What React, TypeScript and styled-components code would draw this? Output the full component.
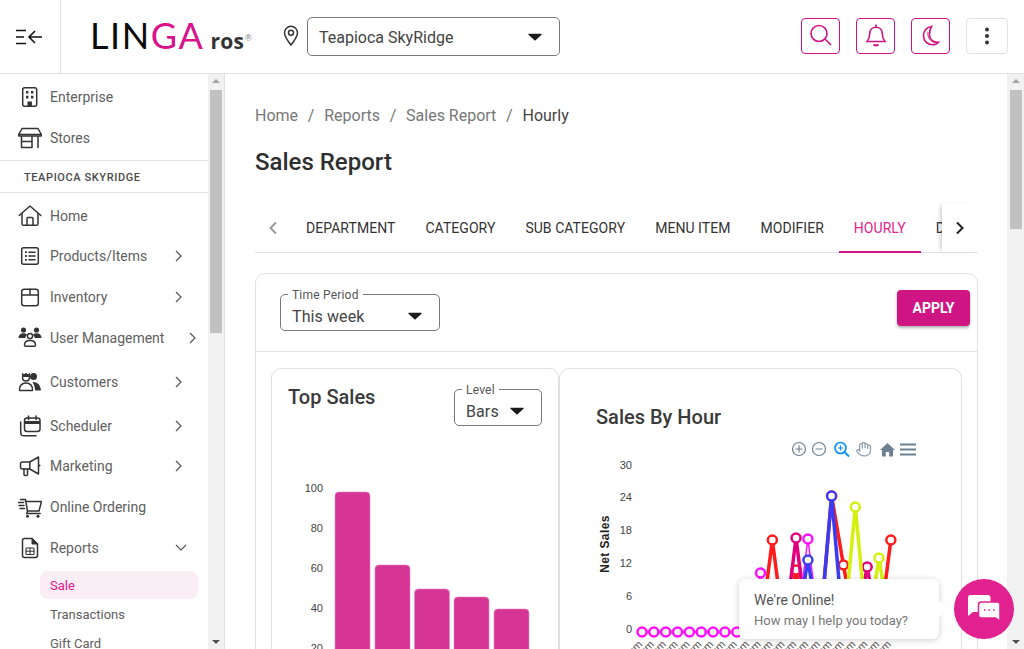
import React from 'react';
import styled, { createGlobalStyle } from 'styled-components';

const GlobalStyle = createGlobalStyle`
    html, body {
        margin: 0;
        padding: 0;
        background: #fff;
        overflow: hidden;
    }
    * {
        box-sizing: border-box;
    }
`;

const PINK = '#cf1583';

const Page = styled.div`
    position: relative;
    width: 1024px;
    height: 649px;
    overflow: hidden;
    display: flex;
    flex-direction: column;
    font-family: Roboto, "Liberation Sans", sans-serif;
    color: #333;
`;

const Header = styled.header`
    height: 74px;
    flex: none;
    display: flex;
    align-items: center;
    border-bottom: 1px solid #e0e0e0;
`;

const MenuCell = styled.div`
    width: 61px;
    height: 73px;
    flex: none;
    display: flex;
    align-items: center;
    justify-content: center;
    padding-right: 3px;
    border-right: 1px solid #e0e0e0;
`;

const Logo = styled.div`
    margin: -3px 0 0 29px;
    width: 193px;
    flex: none;
    display: flex;
    align-items: baseline;
    font-family: Lato, sans-serif;
    white-space: nowrap;
`;

const LogoWord = styled.span<{ $pink?: boolean }>`
    font-size: 36px;
    line-height: 40px;
    font-weight: 400;
    letter-spacing: 1.6px;
    color: ${p => (p.$pink ? '#d9128b' : '#0b0b0b')};
`;

const LogoSuffix = styled.span`
    margin-left: 6px;
    font-family: "Open Sans", sans-serif;
    font-size: 21px;
    font-weight: 700;
    letter-spacing: 0.2px;
    color: #333;
`;

const LogoMark = styled.span`
    align-self: center;
    margin: 6px 0 0 1px;
    font-family: "Liberation Sans", sans-serif;
    font-size: 9px;
    color: #777;
`;

const PinSlot = styled.div`
    width: 16px;
    margin-right: 8px;
    display: flex;
    flex: none;
    margin-top: -2px;
`;

const StoreSelect = styled.div`
    width: 253px;
    height: 39px;
    flex: none;
    margin-top: -1px;
    display: flex;
    align-items: center;
    justify-content: space-between;
    padding: 2px 17px 0 11px;
    border: 1px solid #777;
    border-radius: 5px;
    font-size: 16px;
    color: #444;
`;

const HeaderActions = styled.div`
    display: flex;
    align-items: center;
    margin-left: auto;
    margin-right: 16px;
    margin-top: -1px;
`;

const ActionButton = styled.div`
    width: 39px;
    height: 36px;
    margin-left: 16px;
    display: flex;
    align-items: center;
    justify-content: center;
    border: 1px solid ${PINK};
    border-radius: 4px;
`;

const BellWrap = styled.span`
    display: flex;
    margin-top: -3px;
`;

const MoreButton = styled.div`
    width: 42px;
    height: 36px;
    margin-left: 16px;
    display: flex;
    align-items: center;
    justify-content: center;
    border: 1px solid #e2e2e2;
    border-radius: 4px;
`;

const Body = styled.div`
    flex: 1;
    min-height: 0;
    display: flex;
`;

const Sidebar = styled.aside`
    width: 225px;
    flex: none;
    display: flex;
    border-right: 1px solid #e0e0e0;
`;

const SideNav = styled.nav`
    flex: 1;
    min-width: 0;
    padding-top: 2px;
    overflow: hidden;
`;

const NavRow = styled.div<{ $h: number; $pad?: number }>`
    height: ${p => p.$h}px;
    padding: 0 0 ${p => p.$pad || 0}px 18px;
    display: flex;
    align-items: center;
    font-size: 14px;
    color: #606060;
    white-space: nowrap;
`;

const IconSlot = styled.span`
    width: 24px;
    height: 24px;
    margin-right: 8px;
    flex: none;
    display: flex;
`;

const NavLabel = styled.span`
    min-width: 100px;
    margin-right: 25px;
`;

const StoreHeading = styled.div`
    height: 33px;
    margin: 2px 0 3px;
    padding: 2px 0 0 24px;
    display: flex;
    align-items: center;
    border-top: 1px solid #e0e0e0;
    border-bottom: 1px solid #e0e0e0;
    font-size: 11px;
    font-weight: 500;
    letter-spacing: 0.6px;
    white-space: nowrap;
    color: #4a4a4a;
`;

const SubItem = styled.div<{ $active?: boolean }>`
    height: ${p => (p.$active ? 28 : 29)}px;
    margin: ${p => (p.$active ? '3px 10px 1px 40px' : '0 10px 0 40px')};
    padding-left: 10px;
    display: flex;
    align-items: center;
    border-radius: 8px;
    font-size: 13px;
    background: ${p => (p.$active ? '#faeef4' : 'transparent')};
    color: ${p => (p.$active ? '#e3188d' : '#606060')};
`;

const Rail = styled.div<{ $w: number }>`
    width: ${p => p.$w}px;
    flex: none;
    display: flex;
    flex-direction: column;
    align-items: center;
    background: #f1f1f1;
    position: relative;
`;

const RailUp = styled.div`
    margin-top: 5px;
    width: 0;
    height: 0;
    border-left: 4px solid transparent;
    border-right: 4px solid transparent;
    border-bottom: 4px solid #a3a3a3;
`;

const RailThumb = styled.div<{ $h: number }>`
    width: 12px;
    height: ${p => p.$h}px;
    margin-top: 7px;
    background: #c1c1c1;
`;

const RailDown = styled.div`
    margin-top: auto;
    margin-bottom: 5px;
    width: 0;
    height: 0;
    border-left: 4px solid transparent;
    border-right: 4px solid transparent;
    border-top: 4px solid #505050;
`;

const Main = styled.main`
    flex: 1;
    min-width: 0;
    padding: 0 29px 0 30px;
    overflow: hidden;
`;

const Breadcrumb = styled.div`
    height: 18px;
    margin-top: 32px;
    display: flex;
    align-items: center;
    font-size: 16px;
    color: #777;
`;

const CrumbSep = styled.span`
    margin: 0 9.75px;
`;

const CrumbCurrent = styled.span`
    color: #444;
`;

const PageTitle = styled.h1`
    margin: 22px 0 0;
    height: 32px;
    font-size: 24px;
    line-height: 32px;
    font-weight: 500;
    color: #2f2f2f;
`;

const TabBar = styled.div`
    height: 50px;
    margin-top: 25px;
    display: flex;
    border-bottom: 1px solid #e0e0e0;
`;

const TabArrow = styled.div<{ $shadow?: boolean }>`
    width: 36px;
    flex: none;
    display: flex;
    align-items: center;
    justify-content: center;
    margin-bottom: -1px;
    position: relative;
    box-shadow: ${p => (p.$shadow ? '-4px 0 5px -3px rgba(0,0,0,0.25)' : 'none')};
`;

const TabStrip = styled.div`
    flex: 1;
    min-width: 0;
    display: flex;
    margin-bottom: -1px;
    overflow: hidden;
`;

const Tab = styled.div<{ $active?: boolean }>`
    padding: 2px 15px 0;
    flex: none;
    display: flex;
    align-items: center;
    font-size: 14px;
    letter-spacing: 0.05px;
    white-space: nowrap;
    color: ${p => (p.$active ? '#e3258e' : '#333')};
    border-bottom: 2px solid ${p => (p.$active ? PINK : 'transparent')};
`;

const ReportCard = styled.section`
    margin-top: 20px;
    height: 420px;
    border: 1px solid #e0e0e0;
    border-radius: 10px;
`;

const FilterRow = styled.div`
    height: 78px;
    padding: 20px 7px 0 24px;
    display: flex;
    align-items: flex-start;
    justify-content: space-between;
    border-bottom: 1px solid #e0e0e0;
`;

const ApplyButton = styled.div`
    width: 73px;
    height: 36px;
    margin-top: -4px;
    display: flex;
    align-items: center;
    justify-content: center;
    border-radius: 4px;
    background: ${PINK};
    box-shadow: 0 2px 3px rgba(0, 0, 0, 0.3);
    color: #fff;
    font-size: 14px;
    font-weight: 700;
`;

const OutlinedSelect = styled.div<{ $w: number }>`
    position: relative;
    width: ${p => p.$w}px;
    height: 37px;
    flex: none;
    padding: 7px 17px 0 11px;
    display: flex;
    align-items: center;
    justify-content: space-between;
    border: 1px solid #77797d;
    border-radius: 5px;
    font-size: 16px;
    letter-spacing: 0.1px;
    color: #444;
`;

const SelectLegend = styled.span`
    position: absolute;
    top: -7px;
    left: 7px;
    padding: 0 4px;
    background: #fff;
    font-size: 12px;
    line-height: 14px;
    letter-spacing: 0.2px;
    color: #555;
`;

const ChartRow = styled.div`
    padding: 16px 15px 0;
    display: flex;
`;

const ChartCard = styled.div<{ $w: number }>`
    width: ${p => p.$w}px;
    height: 320px;
    flex: none;
    overflow: hidden;
    border: 1px solid #e0e0e0;
    border-radius: 10px;
`;

const ChartHead = styled.div<{ $pad: string }>`
    height: 71px;
    padding: ${p => p.$pad};
    display: flex;
    align-items: flex-start;
    justify-content: space-between;
`;

const ChartTitle = styled.h2`
    margin: 0;
    font-size: 20px;
    line-height: 24px;
    font-weight: 500;
    color: #3a3a3a;
`;

const LevelSlot = styled.div`
    margin-top: 4px;
`;

const ChartSvg = styled.svg`
    display: block;
    font-family: "Liberation Sans", Arial, sans-serif;
`;

const ChatWidget = styled.div`
    position: absolute;
    left: 739px;
    top: 579px;
    display: flex;
    align-items: center;
`;

const ChatBubble = styled.div`
    position: relative;
    width: 200px;
    height: 60px;
    padding: 13px 15px 0;
    border-radius: 6px;
    background: #fff;
    box-shadow: 0 1px 6px rgba(0, 0, 0, 0.2);
    &::after {
        content: '';
        position: absolute;
        right: -6px;
        top: 24px;
        width: 12px;
        height: 12px;
        background: #fff;
        transform: rotate(45deg);
    }
`;

const ChatTitle = styled.div`
    font-size: 14px;
    line-height: 17px;
    color: #555;
`;

const ChatText = styled.div`
    margin-top: 3px;
    font-size: 13px;
    line-height: 17px;
    white-space: nowrap;
    color: #777;
`;

const ChatButton = styled.div`
    width: 60px;
    height: 60px;
    margin-left: 15px;
    display: flex;
    align-items: center;
    justify-content: center;
    border-radius: 50%;
    background: #e22190;
`;

const Caret = ({ w = 14 }: { w?: number }) => (
    <svg width={w} height="8" viewBox="0 0 14 8">
        <path d="M1 .7h12c.6 0 .9.7.5 1.1L7.6 7.2c-.3.3-.9.3-1.2 0L.5 1.8C.1 1.4.4.7 1 .7z" fill="#1c1c1c" />
    </svg>
);

const Chevron = ({ down }: { down?: boolean }) => (
    <svg width={down ? 12 : 8} height={down ? 8 : 12} viewBox={down ? '0 0 12 8' : '0 0 8 12'} fill="none" stroke="#555" strokeWidth="1.2">
        <path d={down ? 'M1 1l5 5 5-5' : 'M1 1l5 5-5 5'} />
    </svg>
);

const line = { fill: 'none', stroke: '#333', strokeWidth: 1.5, strokeLinecap: 'round', strokeLinejoin: 'round' } as const;

const Icon = ({ children }: { children: React.ReactNode }) => (
    <IconSlot>
        <svg width="24" height="24" viewBox="0 0 24 24">{children}</svg>
    </IconSlot>
);

const icons: Record<string, React.ReactNode> = {
    enterprise: (
        <>
            <rect x="4.7" y="2.7" width="14" height="18.6" rx="2" {...line} />
            <path d="M8 6h2.4v2.6H8zM13 6h2.4v2.6H13zM8 10.8h2.4v2.6H8zM13 10.8h2.4v2.6H13zM9.5 21v-4.6h4.4V21z" fill="#333" />
        </>
    ),
    stores: (
        <>
            <path d="M4 2.5h16l3.3 6H.7z" {...line} />
            <path d="M.8 8.5v1.5h22.4V8.5M3.5 10v11.5M20 10v11.5M3.5 15.5H14M14 10v11.5H3.5" {...line} />
        </>
    ),
    home: (
        <>
            <path d="M1.2 11.5L12 2l10.8 9.5" {...line} />
            <path d="M4 9.5v10.2c0 1 .6 1.6 1.6 1.6h12.8c1 0 1.6-.6 1.6-1.6V9.5M9 21v-6.5c0-.6.4-1 1-1h4c.6 0 1 .4 1 1V21" {...line} />
        </>
    ),
    products: (
        <>
            <rect x="3.7" y="3.7" width="16.6" height="16.6" rx="2" {...line} />
            <path d="M11 8.2h6M11 12h6M11 15.8h6" {...line} />
            <path d="M7 7.2h1.8V9H7zM7 11.1h1.8v1.8H7zM7 15h1.8v1.8H7z" fill="#333" />
        </>
    ),
    inventory: (
        <>
            <rect x="3.7" y="4.2" width="16.6" height="16.6" rx="2.5" {...line} />
            <path d="M3.7 10h16.6M12 4.2V10" {...line} />
        </>
    ),
    users: (
        <>
            <circle cx="5.5" cy="4" r="2.6" fill="#333" />
            <circle cx="18.5" cy="4" r="2.6" fill="#333" />
            <path d="M.5 12c0-3 2-4.7 5-4.7 1.6 0 3 .6 3.6 1.6-1.4 1-1.8 2-1.8 3.1zM23.5 12c0-3-2-4.7-5-4.7-1.6 0-3 .6-3.6 1.6 1.4 1 1.8 2 1.8 3.1z" fill="#333" />
            <circle cx="12" cy="10" r="2.6" {...line} />
            <path d="M6.5 19c0-3 2.5-4.4 5.5-4.4s5.500 1.400 5.500 4.400c0 .9-.6 1.300-1.300 1.300H7.800c-.7 0-1.300-.4-1.300-1.300z" {...line} />
        </>
    ),
    customers: (
        <>
            <path d="M4 2.800l2 1.500 2-1.500 2 1.500 2-1.500v4.200H4z" fill="#333" />
            <path d="M4.500 7.500c0 2.200 1.500 3.500 3.500 3.500s3.500-1.300 3.500-3.500" {...line} />
            <circle cx="15.500" cy="6.500" r="3.500" fill="#333" />
            <path d="M1.500 20.500c-.3-5 2.500-7.500 6.500-7.500s6.800 2.500 6.500 7.500z" {...line} />
            <path d="M14.500 12c4.500-.3 8 2.500 8.500 8.500h-6c0-3.500-1-6-2.500-8.500z" fill="#333" />
        </>
    ),
    scheduler: (
        <>
            <rect x="6.500" y="4" width="15.500" height="13.500" rx="2.500" {...line} />
            <path d="M6.500 8.500h15.500" stroke="#333" strokeWidth="3" />
            <path d="M10.500 2v3.500M18 2v3.500" {...line} />
            <path d="M2.700 8v10.500c0 2 1.300 3.300 3.300 3.300h12" {...line} />
        </>
    ),
    marketing: (
        <>
            <path d="M20.500 3L11.800 8H4.500C3.200 8 2.500 8.800 2.500 10v3c0 1.200.7 2 2 2h7.300l8.700 5z" {...line} />
            <path d="M11.800 8v7M6 15v5.500c0 .6.400 1 1 1h1.500c.6 0 1-.4 1-1V15" {...line} />
            <circle cx="21.500" cy="11.500" r="1" fill="#333" />
        </>
    ),
    online: (
        <>
            <path d="M7.500 6.500h16l-2.500 9.500H9.500L7.500 4.500H4.500M9.500 16l-.8 2.500h13.500" {...line} />
            <path d="M.500 7.500h5M1 10.500h5M2 13.500h4.500M2.500 4.500h2" {...line} />
            <circle cx="9.500" cy="21.300" r="1.500" fill="#333" />
            <circle cx="20" cy="21.300" r="1.500" fill="#333" />
        </>
    ),
    reports: (
        <>
            <path d="M14 2.500H6.500c-1.200 0-2 .8-2 2v15c0 1.200.8 2 2 2h11c1.200 0 2-.8 2-2V8z" {...line} />
            <path d="M14 2.500V8h5.500z" fill="#333" stroke="#333" />
            <rect x="8" y="12" width="8" height="6.500" rx=".8" {...line} strokeWidth="1.100" />
            <path d="M12 12v6.500M8 15.200h8" {...line} strokeWidth="1" />
        </>
    ),
};

const navGroups = [
    { icon: 'home', label: 'Home', h: 40 },
    { icon: 'products', label: 'Products/Items', h: 40.5, more: true },
    { icon: 'inventory', label: 'Inventory', h: 41, more: true },
    { icon: 'users', label: 'User Management', h: 44, pad: 4, more: true },
    { icon: 'customers', label: 'Customers', h: 44, pad: 4, more: true },
    { icon: 'scheduler', label: 'Scheduler', h: 40, more: true },
    { icon: 'marketing', label: 'Marketing', h: 40.5, more: true },
    { icon: 'online', label: 'Online Ordering', h: 41 },
];

const tabs = ['DEPARTMENT', 'CATEGORY', 'SUB CATEGORY', 'MENU ITEM', 'MODIFIER', 'HOURLY', 'DISCOUNT'];

const bars = [
    { x: 335, top: 492 },
    { x: 375, top: 565 },
    { x: 414.5, top: 589 },
    { x: 454, top: 597 },
    { x: 494, top: 609 },
];

const BASE = 632;
const hourX = (i: number) => 642 + i * 11.85;

const series: { color: string; width: number; from: number; peaks: Record<number, number> }[] = [
    { color: '#ff1c1c', width: 3.5, from: 9, peaks: { 11: 540, 13: 570, 16: 496, 17: 565, 21: 540 } },
    { color: '#e0007f', width: 3.5, from: 9, peaks: { 13: 538, 19: 567 } },
    { color: '#ff10ff', width: 1.5, from: 9, peaks: { 10: 573, 14: 539 } },
    { color: '#3b3bf2', width: 3.5, from: 9, peaks: { 14: 560, 16: 496 } },
    { color: '#d5f00f', width: 3.5, from: 9, peaks: { 18: 507, 20: 558 } },
];

const hours = Array.from({ length: 22 }, (_, i) => i);

const TopSalesChart = () => (
    <ChartSvg width="286" height="248" viewBox="272 440 286 248">
        {[[100, 488], [80, 528], [60, 568], [40, 608], [20, 648]].map(([v, y]) => (
            <text key={v} x="323" y={y + 4} fontSize="11" fill="#444" textAnchor="end">{v}</text>
        ))}
        {bars.map(b => (
            <rect key={b.x} x={b.x} y={b.top} width="35" height={720 - b.top} rx="4" fill="#d63596" stroke="#e884bf" strokeWidth="0.6" />
        ))}
    </ChartSvg>
);

const HourlyToolbar = () => (
    <g fill="none" stroke="#6e8192" strokeWidth="1.200">
        <circle cx="799" cy="449" r="6.500" />
        <path d="M795.500 449h7M799 445.500v7" />
        <circle cx="819" cy="449" r="6.500" />
        <path d="M815.500 449h7" />
        <circle cx="840.500" cy="448" r="5.500" stroke="#008ffb" strokeWidth="1.600" />
        <path d="M844.500 452l4.500 4.500" stroke="#008ffb" strokeWidth="1.800" />
        <path d="M838 448h5M840.500 445.500v5" stroke="#008ffb" />
        <g transform="translate(855.500 441) scale(.68)" stroke="#8d9ba8" strokeWidth="1.800" strokeLinecap="round" strokeLinejoin="round">
            <path d="M18 11V6a2 2 0 0 0-2-2a2 2 0 0 0-2 2M14 10V4a2 2 0 0 0-2-2a2 2 0 0 0-2 2v2M10 10.500V6a2 2 0 0 0-2-2a2 2 0 0 0-2 2v8M18 8a2 2 0 1 1 4 0v6a8 8 0 0 1-8 8h-2c-2.800 0-4.500-.86-5.990-2.340l-3.600-3.600a2 2 0 0 1 2.830-2.820L7 15" />
        </g>
        <path d="M880 450l7.500-7 7.500 7h-2v6.500h-3.800v-4.500h-3.400v4.500H882V450z" fill="#6e8192" stroke="none" />
        <path d="M900 444.500h16M900 449.500h16M900 454.500h16" strokeWidth="1.800" />
    </g>
);

const HourlyChart = () => (
    <ChartSvg width="401" height="248" viewBox="560 440 401 248">
        <HourlyToolbar />
        {[[30, 465], [24, 497], [18, 530], [12, 563], [6, 596], [0, 629]].map(([v, y]) => (
            <text key={v} x="632" y={y + 4} fontSize="11" fill="#444" textAnchor="end">{v}</text>
        ))}
        <text transform="translate(609 544) rotate(-90)" fontSize="12" fontWeight="700" letterSpacing=".4" fill="#222" textAnchor="middle">Net Sales</text>
        {hours.map(i => (
            <text key={i} transform={`translate(${hourX(i) + 1} 645) rotate(-45)`} fontSize="11" fill="#555" textAnchor="end">{(i % 12) + 1}pm</text>
        ))}
        <path d={`M${hourX(0)} ${BASE}H${hourX(9)}`} stroke="#e23fd0" strokeWidth="3" />
        {hours.slice(0, 9).map(i => (
            <circle key={i} cx={hourX(i)} cy={BASE} r="4.500" fill="#fff" stroke="#ff10ff" strokeWidth="2.500" />
        ))}
        {series.map(s => {
            const used = hours.filter(i => i >= s.from);
            const points = used.map(i => `${hourX(i)},${s.peaks[i] ?? BASE}`).join(' ');
            return (
                <g key={s.color}>
                    <polyline points={points} fill="none" stroke={s.color} strokeWidth={s.width} />
                    {Object.keys(s.peaks).map(k => (
                        <circle key={k} cx={hourX(Number(k))} cy={s.peaks[Number(k)]} r="4.500" fill="#fff" stroke={s.color} strokeWidth="2.500" />
                    ))}
                </g>
            );
        })}
    </ChartSvg>
);

const App = () => (
    <Page>
        <GlobalStyle />
        <Header>
            <MenuCell>
                <svg width="28" height="18" viewBox="0 0 28 18" fill="none" stroke="#111" strokeWidth="1.600">
                    <path d="M1 2.500h10M1 9h8M1 15.500h10M27 9H14.500M20 3l-6 6 6 6" />
                </svg>
            </MenuCell>
            <Logo>
                <LogoWord>LIN</LogoWord>
                <LogoWord $pink>GA</LogoWord>
                <LogoSuffix>ros</LogoSuffix>
                <LogoMark>®</LogoMark>
            </Logo>
            <PinSlot>
                <svg width="16" height="21" viewBox="0 0 16 21" fill="none" stroke="#333" strokeWidth="1.500">
                    <path d="M8 20C4 15 1.500 11.500 1.500 7.800a6.500 6.500 0 0113 0C14.500 11.500 12 15 8 20z" />
                    <circle cx="8" cy="7.800" r="2.500" />
                </svg>
            </PinSlot>
            <StoreSelect>
                Teapioca SkyRidge
                <Caret />
            </StoreSelect>
            <HeaderActions>
                <ActionButton>
                    <svg width="24" height="24" viewBox="0 0 24 24" fill="none" stroke={PINK} strokeWidth="1.600">
                        <circle cx="10" cy="9.500" r="8" />
                        <path d="M16 15l6 6" />
                    </svg>
                </ActionButton>
                <ActionButton>
                    <BellWrap>
                        <svg width="22" height="24" viewBox="0 0 22 24" fill="none" stroke={PINK} strokeWidth="1.600">
                            <path d="M2 18.500h18c-2-2.500-2.700-4-2.700-7.500 0-4-2.500-6.700-6.300-6.700S4.700 7 4.700 11c0 3.500-.7 5-2.700 7.500z" />
                            <path d="M11 1.500v2.800" />
                            <path d="M8.500 21.500c1.500 1.200 3.500 1.200 5 0" strokeWidth="2" />
                        </svg>
                    </BellWrap>
                </ActionButton>
                <ActionButton>
                    <svg width="22" height="24" viewBox="0 0 22 24" fill="none" stroke={PINK} strokeWidth="1.600">
                        <path d="M11.500 2.500C6.800 3.500 3.500 7 3.500 11.800c0 5 3.800 9 9 9 2.600 0 4.800-.9 6-2.500-5.200.5-9-2.800-9-7.800 0-3.200.7-6 2-8z" />
                        <path d="M8 8c-.8 5 2 10.500 9 11" strokeWidth="1" />
                    </svg>
                </ActionButton>
                <MoreButton>
                    <svg width="6" height="18" viewBox="0 0 6 18" fill="#333">
                        <circle cx="3" cy="2.500" r="2" />
                        <circle cx="3" cy="9" r="2" />
                        <circle cx="3" cy="15.500" r="2" />
                    </svg>
                </MoreButton>
            </HeaderActions>
        </Header>
        <Body>
            <Sidebar>
                <SideNav>
                    <NavRow $h={41}>
                        <Icon>{icons.enterprise}</Icon>
                        Enterprise
                    </NavRow>
                    <NavRow $h={41}>
                        <Icon>{icons.stores}</Icon>
                        Stores
                    </NavRow>
                    <StoreHeading>TEAPIOCA SKYRIDGE</StoreHeading>
                    {navGroups.map(item => (
                        <NavRow key={item.label} $h={item.h} $pad={item.pad}>
                            <Icon>{icons[item.icon]}</Icon>
                            <NavLabel>{item.label}</NavLabel>
                            {item.more && <Chevron />}
                        </NavRow>
                    ))}
                    <NavRow $h={41}>
                        <Icon>{icons.reports}</Icon>
                        <NavLabel>Reports</NavLabel>
                        <Chevron down />
                    </NavRow>
                    <SubItem $active>Sale</SubItem>
                    <SubItem>Transactions</SubItem>
                    <SubItem>Gift Card</SubItem>
                </SideNav>
                <Rail $w={16}>
                    <RailUp />
                    <RailThumb $h={243} />
                    <RailDown />
                </Rail>
            </Sidebar>
            <Main>
                <Breadcrumb>
                    Home<CrumbSep>/</CrumbSep>Reports<CrumbSep>/</CrumbSep>Sales Report<CrumbSep>/</CrumbSep>
                    <CrumbCurrent>Hourly</CrumbCurrent>
                </Breadcrumb>
                <PageTitle>Sales Report</PageTitle>
                <TabBar>
                    <TabArrow>
                        <svg width="10" height="14" viewBox="0 0 10 14" fill="none" stroke="#999" strokeWidth="2">
                            <path d="M8 1.500L2.500 7 8 12.500" />
                        </svg>
                    </TabArrow>
                    <TabStrip>
                        {tabs.map(t => (
                            <Tab key={t} $active={t === 'HOURLY'}>{t}</Tab>
                        ))}
                    </TabStrip>
                    <TabArrow $shadow>
                        <svg width="10" height="14" viewBox="0 0 10 14" fill="none" stroke="#222" strokeWidth="2">
                            <path d="M2 1.500L7.500 7 2 12.500" />
                        </svg>
                    </TabArrow>
                </TabBar>
                <ReportCard>
                    <FilterRow>
                        <OutlinedSelect $w={160}>
                            <SelectLegend>Time Period</SelectLegend>
                            This week
                            <Caret />
                        </OutlinedSelect>
                        <ApplyButton>APPLY</ApplyButton>
                    </FilterRow>
                    <ChartRow>
                        <ChartCard $w={288}>
                            <ChartHead $pad="16px 16px 0">
                                <ChartTitle>Top Sales</ChartTitle>
                                <LevelSlot>
                                    <OutlinedSelect $w={88}>
                                        <SelectLegend>Level</SelectLegend>
                                        Bars
                                        <Caret />
                                    </OutlinedSelect>
                                </LevelSlot>
                            </ChartHead>
                            <TopSalesChart />
                        </ChartCard>
                        <ChartCard $w={403}>
                            <ChartHead $pad="36px 36px 0">
                                <ChartTitle>Sales By Hour</ChartTitle>
                            </ChartHead>
                            <HourlyChart />
                        </ChartCard>
                    </ChartRow>
                </ReportCard>
            </Main>
            <Rail $w={17}>
                <RailUp />
                <RailThumb $h={139} />
                <RailDown />
            </Rail>
        </Body>
        <ChatWidget>
            <ChatBubble>
                <ChatTitle>We're Online!</ChatTitle>
                <ChatText>How may I help you today?</ChatText>
            </ChatBubble>
            <ChatButton>
                <svg width="34" height="30" viewBox="0 0 34 30">
                    <path d="M3 1h18c1.500 0 2.500 1 2.500 2.500v12c0 1.500-1 2.500-2.500 2.500H6l-5 4V3.500C1 2 1.700 1 3 1z" fill="#fff" />
                    <path d="M14 8h16.500c1.500 0 2.500 1 2.500 2.500v16.500l-4.500-3H14c-1.500 0-2.500-1-2.500-2.500v-11C11.500 9 12.500 8 14 8z" fill="#fff" stroke="#e22190" strokeWidth="1.500" />
                    <path d="M17 16h1.500M21.500 16H23M26 16h1.500" stroke="#e22190" strokeWidth="1.500" />
                </svg>
            </ChatButton>
        </ChatWidget>
    </Page>
);

export default App;
